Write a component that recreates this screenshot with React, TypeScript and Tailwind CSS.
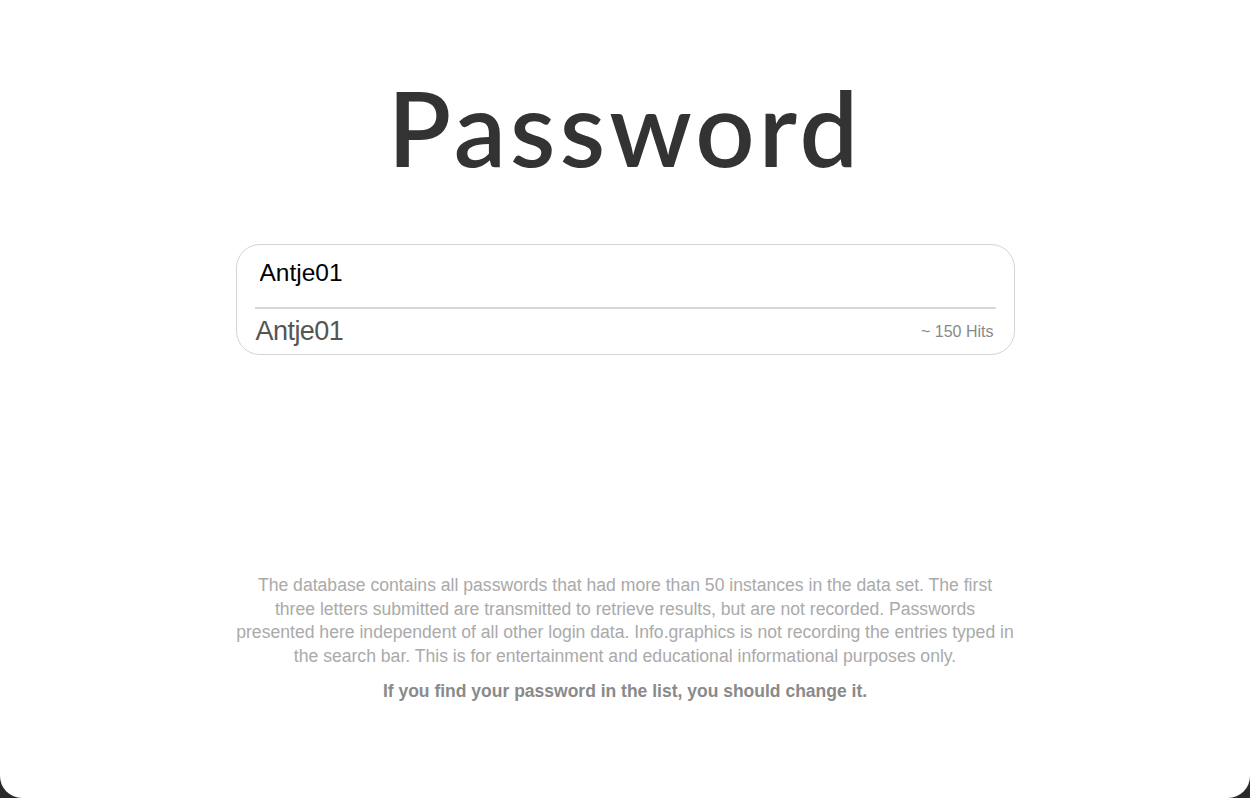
import { useState } from "react";

export default function App() {
  const [query, setQuery] = useState("Antje01");

  return (
    <div className="min-h-screen bg-[#2a2a2a]">
      <div className="h-[798px] bg-white rounded-b-[22px] flex flex-col items-center font-['Liberation_Sans',Arial,sans-serif]">
        {/* Heading */}
        <h1 className="mt-[65px] text-[104px] leading-[124px] tracking-[0.04em] text-[#333] font-['Lato',sans-serif] font-semibold">
          Password
        </h1>

        {/* Search box with the single result */}
        <div className="mt-[55px] w-[779px] border border-[#d4d4d4] rounded-[24px] bg-white">
          <div className="h-[62px] px-[23px] flex items-center">
            <input
              value={query}
              onChange={(e) => setQuery(e.target.value)}
              className="w-full outline-none text-[24.5px] text-black pb-[6px] bg-transparent"
            />
          </div>
          <div className="mx-[18px] border-t-2 border-[#d8d8d8]" />
          <div className="h-[45px] pl-[19px] pr-[20px] flex items-center justify-between">
            <span className="text-[27px] font-light text-[#555] tracking-[-0.02em]">{query}</span>
            <span className="text-[16px] text-[#888]">~ 150 Hits</span>
          </div>
        </div>

        {/* Disclaimer */}
        <div className="mt-[219px] w-[800px] text-center">
          <p className="text-[17.6px] leading-[23.5px] text-[#aaa]">
            The database contains all passwords that had more than 50 instances in the data set. The first
            <br />
            three letters submitted are transmitted to retrieve results, but are not recorded. Passwords
            <br />
            presented here independent of all other login data. Info.graphics is not recording the entries typed in
            <br />
            the search bar. This is for entertainment and educational informational purposes only.
          </p>
          <p className="mt-[10px] text-[17.5px] font-bold text-[#8a8a8a]">
            If you find your password in the list, you should change it.
          </p>
        </div>
      </div>
    </div>
  );
}
